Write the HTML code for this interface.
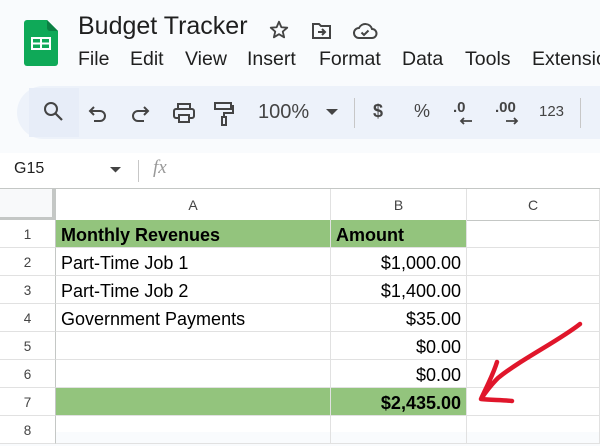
<!DOCTYPE html>
<html><head><meta charset="utf-8"><style>
*{margin:0;padding:0;box-sizing:border-box}
body{width:600px;height:432px;overflow:hidden;background:#f9fbfd;font-family:"Liberation Sans",Arial,sans-serif;position:relative;color:#1f1f1f}
.a{position:absolute}
.menu span{position:absolute;top:48px;font-size:19.5px;color:#1f1f1f}
.tb{left:17px;top:86px;width:640px;height:53px;background:#edf2fa;border-radius:27px}
.ic{position:absolute;top:100px}
.grid{left:0;top:188px;width:600px;height:244px;background:#fff}
.cell{position:absolute;height:28px;border-right:1px solid #e1e1e1;border-bottom:1px solid #e1e1e1;font-size:18px;line-height:31px;padding:0 5px;color:#000;white-space:nowrap}
.rh{position:absolute;left:0;width:56px;height:28px;border-right:1px solid #c4c7c5;border-bottom:1px solid #e1e1e1;background:#fff;font-size:13.5px;color:#444;text-align:center;line-height:30px}
.g{background:#93c47d}
.r{text-align:right}
</style></head><body>
<svg class="a" style="left:24px;top:20px" width="34" height="46" viewBox="0 0 34 46"><path d="M3 0H23L34 11V43a3 3 0 0 1-3 3H3a3 3 0 0 1-3-3V3a3 3 0 0 1 3-3z" fill="#0fa958"/><path d="M23 0L34 11H26a3 3 0 0 1-3-3z" fill="#0b8043"/><rect x="7" y="17" width="20" height="13" fill="#fff"/><rect x="9" y="19" width="7" height="3.5" fill="#0fa958"/><rect x="18" y="19" width="7" height="3.5" fill="#0fa958"/><rect x="9" y="24.5" width="7" height="3.5" fill="#0fa958"/><rect x="18" y="24.5" width="7" height="3.5" fill="#0fa958"/></svg>
<div class="a" style="left:78px;top:12px;font-size:25px;color:#1f1f1f">Budget Tracker</div>
<svg class="a" style="left:268px;top:19px" width="22" height="22" viewBox="0 0 24 24"><path d="M12 3l2.6 6 6.4.5-4.9 4.2 1.5 6.3L12 16.6 6.4 20l1.5-6.3L3 9.5 9.4 9z" fill="none" stroke="#444" stroke-width="2" stroke-linejoin="round"/></svg>
<svg class="a" style="left:311px;top:21px" width="22" height="20" viewBox="0 0 22 20"><path d="M2 3h6l2 2h9v12H2z" fill="none" stroke="#444" stroke-width="2"/><path d="M7 11h7M11 8l3 3-3 3" fill="none" stroke="#444" stroke-width="2"/></svg>
<svg class="a" style="left:352px;top:21px" width="26" height="20" viewBox="0 0 26 20"><path d="M7 17a5 5 0 0 1 0-10 7 7 0 0 1 13 1 4.5 4.5 0 0 1 0 9z" fill="none" stroke="#444" stroke-width="2"/><path d="M9.5 11.5l2.5 2.5 4.5-4.5" fill="none" stroke="#444" stroke-width="2"/></svg>
<div class="menu"><span style="left:78px">File</span><span style="left:130px">Edit</span><span style="left:185px">View</span><span style="left:247px">Insert</span><span style="left:319px">Format</span><span style="left:402px">Data</span><span style="left:465px">Tools</span><span style="left:532px">Extensions</span></div>
<div class="a tb"></div>
<div class="a" style="left:29px;top:88px;width:50px;height:49px;background:#e7edf8"></div>
<svg class="ic" style="left:42px" width="22" height="22" viewBox="0 0 22 22"><circle cx="9" cy="9" r="6" fill="none" stroke="#444" stroke-width="2"/><path d="M13.5 13.5L20 20" stroke="#444" stroke-width="2.2"/></svg>
<svg class="ic" style="left:88px;top:103px" width="20" height="20" viewBox="0 0 20 20"><path d="M6 4L2 8l4 4M2 8h10a5 5 0 0 1 0 10H6" fill="none" stroke="#444" stroke-width="2"/></svg>
<svg class="ic" style="left:130px;top:103px" width="20" height="20" viewBox="0 0 20 20"><path d="M14 4l4 4-4 4M18 8H8a5 5 0 0 0 0 10h6" fill="none" stroke="#444" stroke-width="2"/></svg>
<svg class="ic" style="left:172px;top:102px" width="24" height="22" viewBox="0 0 24 22"><path d="M6 6V2h12v4" fill="none" stroke="#444" stroke-width="2"/><rect x="2" y="7" width="20" height="9" rx="2" fill="none" stroke="#444" stroke-width="2"/><rect x="7" y="13" width="10" height="7" fill="#edf2fa" stroke="#444" stroke-width="2"/></svg>
<svg class="ic" style="left:213px;top:101px" width="22" height="26" viewBox="0 0 22 26"><rect x="2" y="2" width="16" height="6" fill="none" stroke="#444" stroke-width="2"/><path d="M18 5h2v7H11v4" fill="none" stroke="#444" stroke-width="2"/><rect x="9" y="16" width="4" height="8" fill="none" stroke="#444" stroke-width="2"/></svg>
<div class="a" style="left:258px;top:101px;font-size:20px;color:#444">100%</div>
<svg class="a" style="left:326px;top:109px" width="12" height="7"><path d="M0 0h12L6 6z" fill="#444"/></svg>
<div class="a" style="left:354px;top:98px;width:1px;height:30px;background:#c7c7c7"></div>
<div class="a" style="left:373px;top:101px;font-size:18px;color:#444;font-weight:bold">$</div>
<div class="a" style="left:414px;top:101px;font-size:18px;color:#444">%</div>
<div class="a" style="left:453px;top:99px;font-size:15px;color:#444;font-weight:bold">.0</div>
<svg class="a" style="left:459px;top:117px" width="14" height="8"><path d="M13 4H2M5 1L2 4l3 3" fill="none" stroke="#444" stroke-width="1.8"/></svg>
<div class="a" style="left:495px;top:99px;font-size:15px;color:#444;font-weight:bold">.00</div>
<svg class="a" style="left:505px;top:117px" width="14" height="8"><path d="M1 4h11M9 1l3 3-3 3" fill="none" stroke="#444" stroke-width="1.8"/></svg>
<div class="a" style="left:539px;top:103px;font-size:15px;color:#444">123</div>
<div class="a" style="left:580px;top:98px;width:1px;height:30px;background:#c7c7c7"></div>
<div class="a" style="left:0;top:153px;width:600px;height:35px;background:#fff"></div>
<div class="a" style="left:14px;top:160px;font-size:16px;color:#1f1f1f">G15</div>
<svg class="a" style="left:110px;top:167px" width="12" height="6"><path d="M0 0h11L5.5 5.5z" fill="#444"/></svg>
<div class="a" style="left:138px;top:160px;width:1px;height:22px;background:#c7c7c7"></div>
<div class="a" style="left:153px;top:157px;font-size:19px;color:#999;font-family:'Liberation Serif',serif;font-style:italic">fx</div>
<div class="a grid">
<div class="a" style="left:0;top:0;width:600px;height:1px;background:#c4c7c5"></div>
<div class="a" style="left:0;top:1px;width:56px;height:32px;background:#f8f9fa;border-right:4px solid #c4c7c5;border-bottom:4px solid #c4c7c5"></div>
<div class="cell" style="left:56px;top:1px;width:275px;height:32px;line-height:33px;text-align:center;font-size:14px;color:#444;border-bottom-color:#c4c7c5">A</div>
<div class="cell" style="left:331px;top:1px;width:136px;height:32px;line-height:33px;text-align:center;font-size:14px;color:#444;border-bottom-color:#c4c7c5">B</div>
<div class="cell" style="left:467px;top:1px;width:133px;height:32px;line-height:33px;text-align:center;font-size:14px;color:#444;border-bottom-color:#c4c7c5">C</div>
</div>
<div class="rh" style="top:220px">1</div><div class="cell g" style="left:56px;top:220px;width:275px;font-weight:bold">Monthly Revenues</div><div class="cell g" style="left:331px;top:220px;width:136px;font-weight:bold">Amount</div><div class="cell" style="left:467px;top:220px;width:133px"></div>
<div class="rh" style="top:248px">2</div><div class="cell" style="left:56px;top:248px;width:275px">Part-Time Job 1</div><div class="cell r" style="left:331px;top:248px;width:136px">$1,000.00</div><div class="cell" style="left:467px;top:248px;width:133px"></div>
<div class="rh" style="top:276px">3</div><div class="cell" style="left:56px;top:276px;width:275px">Part-Time Job 2</div><div class="cell r" style="left:331px;top:276px;width:136px">$1,400.00</div><div class="cell" style="left:467px;top:276px;width:133px"></div>
<div class="rh" style="top:304px">4</div><div class="cell" style="left:56px;top:304px;width:275px">Government Payments</div><div class="cell r" style="left:331px;top:304px;width:136px">$35.00</div><div class="cell" style="left:467px;top:304px;width:133px"></div>
<div class="rh" style="top:332px">5</div><div class="cell" style="left:56px;top:332px;width:275px"></div><div class="cell r" style="left:331px;top:332px;width:136px">$0.00</div><div class="cell" style="left:467px;top:332px;width:133px"></div>
<div class="rh" style="top:360px">6</div><div class="cell" style="left:56px;top:360px;width:275px"></div><div class="cell r" style="left:331px;top:360px;width:136px">$0.00</div><div class="cell" style="left:467px;top:360px;width:133px"></div>
<div class="rh" style="top:388px">7</div><div class="cell g" style="left:56px;top:388px;width:275px"></div><div class="cell g r" style="left:331px;top:388px;width:136px;font-weight:bold">$2,435.00</div><div class="cell" style="left:467px;top:388px;width:133px"></div>
<div class="rh" style="top:416px">8</div><div class="cell" style="left:56px;top:416px;width:275px"></div><div class="cell" style="left:331px;top:416px;width:136px"></div><div class="cell" style="left:467px;top:416px;width:133px"></div>
<svg class="a" style="left:0;top:0" width="600" height="432"><path d="M580 324C560 340 520 360 498 378C490 386 485 393 481 399M497 362C493 375 486 388 481 399C490 400 503 400 512 401" fill="none" stroke="#e0162b" stroke-width="4.5" stroke-linecap="round" stroke-linejoin="round"/></svg>
</body></html>
